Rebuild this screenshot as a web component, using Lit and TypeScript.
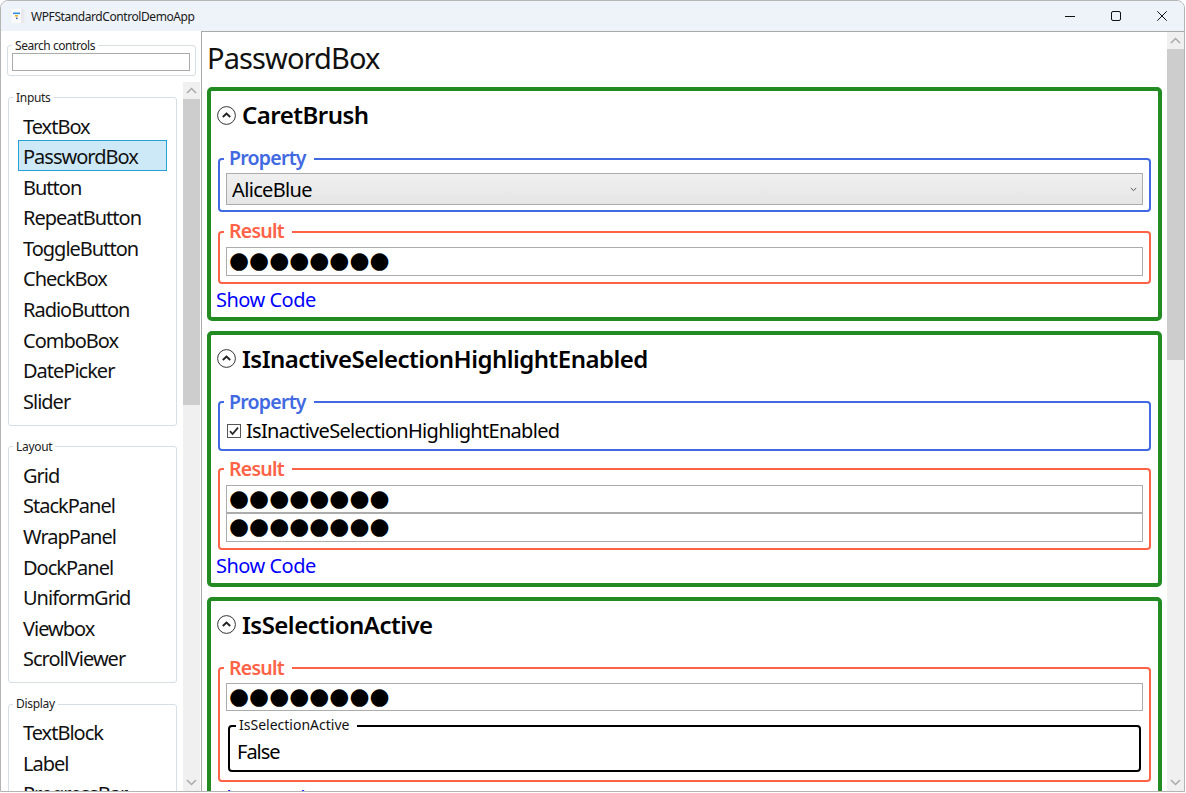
import { LitElement, html, css } from "lit";
import { customElement } from "lit/decorators.js";

const groups = [
  { name: "Inputs", items: ["TextBox", "PasswordBox", "Button", "RepeatButton", "ToggleButton", "CheckBox", "RadioButton", "ComboBox", "DatePicker", "Slider"] },
  { name: "Layout", items: ["Grid", "StackPanel", "WrapPanel", "DockPanel", "UniformGrid", "Viewbox", "ScrollViewer"] },
  { name: "Display", items: ["TextBlock", "Label", "ProgressBar"] },
];

const DOTS = "●●●●●●●●";

@customElement("app-root")
export class AppRoot extends LitElement {
  static styles = css`
    :host { display: block; width: 1186px; height: 793px; background: #fff; overflow: hidden;
      font-family: "Noto Sans", "Open Sans", sans-serif; color: #000; }
    * { box-sizing: border-box; }
    .window { width: 1185px; height: 792px; border: 1px solid #b4b4b4; border-radius: 8px 8px 0 0;
      display: flex; flex-direction: column; overflow: hidden; background: #fff; }
    .titlebar { height: 30px; flex: none; background: #edf3f8; display: flex; align-items: center; }
    .app-icon { margin-left: 10px; width: 14px; height: 14px; flex: none; }
    .title { margin-left: 6px; font-size: 12px; letter-spacing: -0.42px; color: #1a1a1a; flex: 1; }
    .wc { width: 46px; display: flex; justify-content: center; }
    .wc svg { display: block; margin-left: 2px; }
    .body { flex: 1; display: flex; min-height: 0; }
    .side { width: 200px; flex: none; display: flex; flex-direction: column; min-height: 0; }
    fieldset { margin: 0; min-width: 0; display: block; }
    .search { margin: 7px 5px 0 6px; height: 38px; border: 1px solid #d5dfe5; border-radius: 3px; padding: 0 5px 0 4px; }
    .search legend { font-size: 12px; line-height: 16px; padding: 0 3px 0 3px; margin-left: 0; letter-spacing: -0.45px; color: #222; height: 15px; }
    .search .box { height: 18px; border: 1px solid #ababab; }
    .side-scroll { flex: 1; min-height: 0; margin-top: 6px; display: flex; }
    .side-list { flex: 1; min-width: 0; overflow: hidden; padding: 7.5px 6px 0 7px; }
    .group { border: 1px solid #d5dfe5; border-radius: 3px; padding: 0 9px 9.3px 9px; margin-bottom: 13px; }
    .group legend { font-size: 12px; line-height: 16px; padding: 0 3px; margin-left: -5px; letter-spacing: -0.3px; color: #222; }
    .item { height: 30.6px; line-height: 31px; font-size: 20px; padding-left: 4px; border: 1px solid transparent; letter-spacing: -1px; color: #111; white-space: nowrap; }
    .item.sel { background: #cde8f7; border-color: #26a0da; }
    .group .items { padding-top: 4px; }
    .sb { width: 17px; flex: none; background: #f0f0f0; display: flex; flex-direction: column; }
    .sb .arrow { height: 17px; flex: none; display: flex; align-items: center; justify-content: center; }
    .sb .thumb { background: #cdcdcd; flex: none; }
    .sb .track { flex: 1; }
    .side .sb { margin-right: 1px; }
    .main { flex: 1; min-width: 0; display: flex; border-left: 1px solid #a9a9a9; border-top: 1px solid #a9a9a9; }
    .content { flex: 1; min-width: 0; overflow: hidden; padding: 0 5px 0 5px; }
    h1 { margin: 0; font-size: 29px; line-height: 40px; font-weight: 400; height: 55px; padding-top: 6px; letter-spacing: -0.9px; color: #111; }
    .card { border: 4px solid #228b22; border-radius: 5px; padding: 0 7px; margin-bottom: 10px; }
    .head { height: 48px; display: flex; align-items: center; }
    .head svg { flex: none; display: block; margin-left: -1px; }
    .head h2 { margin: 0 0 0 6px; font-size: 24px; line-height: 32px; font-weight: 600; letter-spacing: -0.52px; white-space: nowrap; }
    .fs { border: 2px solid; border-radius: 4px; padding: 0 6px 6px 6px; margin-top: 6px; }
    .fs.prop { padding-bottom: 5px; }
    .fs.tight + .res { margin-top: 5px; }
    .fs legend { font-size: 19.5px; line-height: 25px; font-weight: 600; padding: 0 8px 0 5px; margin-left: -2px; letter-spacing: -0.75px; height: 27px; }
    .prop { border-color: #4169e1; }
    .prop legend { color: #4169e1; }
    .res { border-color: #ff6347; }
    .res legend { color: #ff6347; }
    .combo { height: 32px; margin-top: 1px; border: 1px solid #acacac; background: linear-gradient(#f0f0f0, #e5e5e5); display: flex; align-items: center; font-size: 20px; letter-spacing: -0.65px; padding-left: 5px; }
    .combo span { flex: 1; }
    .combo svg { margin-right: 5px; }
    .pw { height: 28.5px; border: 1px solid #acacac; display: flex; align-items: center; padding: 0 0 2px 2px; font-family: "DejaVu Sans", sans-serif; font-size: 23px; line-height: 26px; overflow: hidden; color: #000; }
    legend + .pw { margin-top: 2px; }
    .fs.compact legend + .pw { margin-top: 1px; height: 28px; }
    .check { display: flex; align-items: center; height: 26px; padding-left: 1px; font-size: 20px; letter-spacing: -0.7px; margin-top: 2px; }
    .check svg { margin-right: 5px; flex: none; }
    .link { display: block; margin: 2px 0 4px -2px; font-size: 20px; line-height: 27px; color: #0000ff; letter-spacing: -0.5px; height: 27px; text-decoration: none; }
    .inner { border: 2px solid #000; border-radius: 4px; margin: 5.5px 2px 2px 2px; padding: 0 6px 4px 7px; height: 56px; }
    .inner legend { font-size: 14px; font-weight: 400; line-height: 17px; height: 19px; padding: 0 8px 0 3px; margin-left: -1px; letter-spacing: 0; color: #111; }
    .inner .val { font-size: 20px; line-height: 27px; letter-spacing: -1px; margin-top: 3px; }
  `;

  private chevron() {
    return html`<svg width="19" height="19" viewBox="0 0 19 19" fill="none">
      <circle cx="9.5" cy="9.5" r="8.9" stroke="#333" stroke-width="1"></circle>
      <path d="M5.8 11 L9.5 7.5 L13.2 11" stroke="#222" stroke-width="1.9"></path>
    </svg>`;
  }

  private arrow(up: boolean) {
    return html`<svg width="11" height="7" viewBox="0 0 11 7" fill="none">
      <path d=${up ? "M1 6 L5.5 1.5 L10 6" : "M1 1 L5.5 5.5 L10 1"} stroke="#aaa" stroke-width="1.5"></path>
    </svg>`;
  }

  private scrollbar(thumb: number) {
    return html`<div class="sb">
      <div class="arrow">${this.arrow(true)}</div>
      <div class="thumb" style="height:${thumb}px"></div>
      <div class="track"></div>
      <div class="arrow">${this.arrow(false)}</div>
    </div>`;
  }

  private pw() {
    return html`<div class="pw">${DOTS}</div>`;
  }

  render() {
    return html`<div class="window">
      <div class="titlebar">
        <svg class="app-icon" viewBox="0 0 14 14">
          <rect x="0.5" y="0" width="13" height="14" fill="#fafafa"></rect>
          <rect x="10" y="0" width="3.5" height="14" fill="#e8e8ee"></rect>
          <rect x="2" y="3.5" width="7" height="1.6" fill="#2e8fe0"></rect>
          <rect x="4" y="6" width="3" height="1.6" fill="#f0b429"></rect>
          <rect x="5" y="8.5" width="1.6" height="1.6" fill="#3a6ea5"></rect>
        </svg>
        <div class="title">WPFStandardControlDemoApp</div>
        <div class="wc"><svg width="10" height="10" viewBox="0 0 10 10"><path d="M0 5.5H10" stroke="#111" stroke-width="1"></path></svg></div>
        <div class="wc"><svg width="10" height="10" viewBox="0 0 10 10" fill="none"><rect x="0.5" y="0.5" width="9" height="9" rx="1.5" stroke="#111" stroke-width="1"></rect></svg></div>
        <div class="wc"><svg width="10" height="10" viewBox="0 0 10 10" fill="none"><path d="M0.3 0.3L9.7 9.7M9.7 0.3L0.3 9.7" stroke="#111" stroke-width="1"></path></svg></div>
      </div>
      <div class="body">
        <div class="side">
          <fieldset class="search"><legend>Search controls</legend><div class="box"></div></fieldset>
          <div class="side-scroll">
            <div class="side-list">
              ${groups.map((g) => html`<fieldset class="group"><legend>${g.name}</legend><div class="items">
                ${g.items.map((i) => html`<div class="item ${i === "PasswordBox" ? "sel" : ""}">${i}</div>`)}
              </div></fieldset>`)}
            </div>
            ${this.scrollbar(306)}
          </div>
        </div>
        <div class="main">
          <div class="content">
            <h1>PasswordBox</h1>
            <div class="card">
              <div class="head">${this.chevron()}<h2>CaretBrush</h2></div>
              <fieldset class="fs prop"><legend>Property</legend>
                <div class="combo"><span>AliceBlue</span>
                  <svg width="7" height="5" viewBox="0 0 7 5" fill="none"><path d="M0.8 1L3.5 3.6L6.2 1" stroke="#555" stroke-width="1"></path></svg>
                </div>
              </fieldset>
              <fieldset class="fs res"><legend>Result</legend>${this.pw()}</fieldset>
              <a class="link">Show Code</a>
            </div>
            <div class="card">
              <div class="head">${this.chevron()}<h2>IsInactiveSelectionHighlightEnabled</h2></div>
              <fieldset class="fs prop tight"><legend>Property</legend>
                <div class="check">
                  <svg width="14" height="14" viewBox="0 0 14 14" fill="none">
                    <rect x="0.5" y="0.5" width="13" height="13" fill="#fff" stroke="#555"></rect>
                    <path d="M3 7.2L5.6 10L11 3.6" stroke="#222" stroke-width="1.7"></path>
                  </svg>
                  IsInactiveSelectionHighlightEnabled
                </div>
              </fieldset>
              <fieldset class="fs res"><legend>Result</legend>${this.pw()}${this.pw()}</fieldset>
              <a class="link">Show Code</a>
            </div>
            <div class="card">
              <div class="head">${this.chevron()}<h2>IsSelectionActive</h2></div>
              <fieldset class="fs res compact"><legend>Result</legend>${this.pw()}
                <fieldset class="inner"><legend>IsSelectionActive</legend><div class="val">False</div></fieldset>
              </fieldset>
              <a class="link">Show Code</a>
            </div>
          </div>
          ${this.scrollbar(311)}
        </div>
      </div>
    </div>`;
  }
}
